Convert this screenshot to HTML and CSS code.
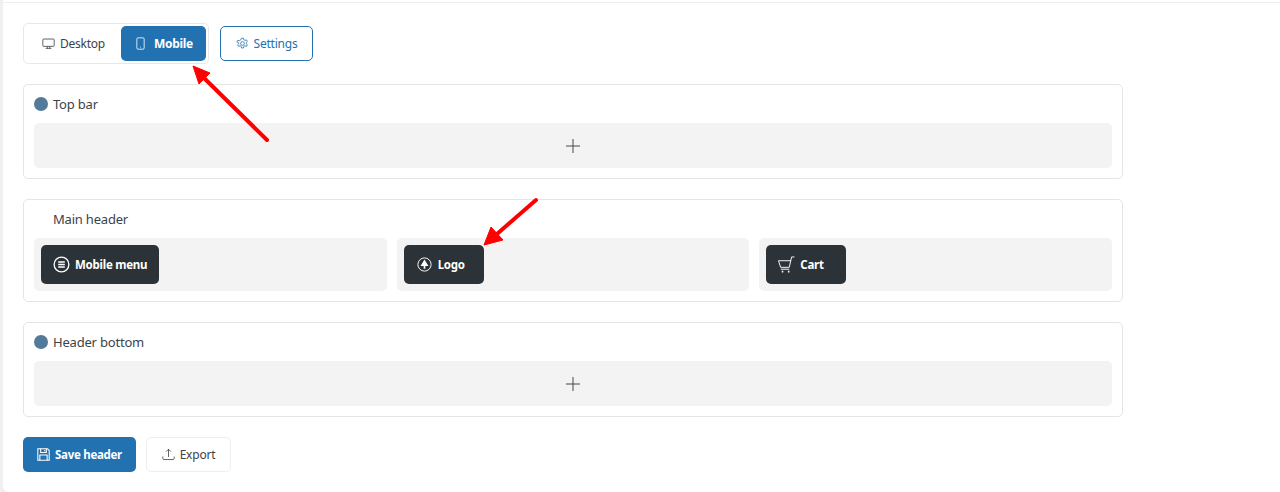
FILE: index.html
```html
<!DOCTYPE html>
<html lang="en">
  <head>
    <meta charset="UTF-8" />
    <title>Header builder</title>
    <link rel="stylesheet" href="styles.css">
  </head>
  <body>
    <div class="page">
      <div class="toolbar">
        <div class="device-tabs">
          <button class="btn tab">
            <svg class="icon" viewBox="0 0 16 16" fill="none" stroke="currentColor"><rect x="1" y="2.5" width="14" height="9" rx="1"/><path d="M6.5 11.5v2.5M9.5 11.5v2.5M4.5 14h7"/></svg>
            Desktop
          </button>
          <button class="btn tab tab-active">
            <svg class="icon" viewBox="0 0 16 16" fill="none" stroke="currentColor"><rect x="3.5" y="1" width="9" height="14" rx="1.5"/><path d="M7.5 12.5h1"/></svg>
            Mobile
          </button>
        </div>
        <button class="btn btn-outline">
          <svg class="icon" viewBox="0 0 16 16" fill="none" stroke="currentColor"><circle cx="8" cy="8" r="2.3"/><path d="M6.8 1.5h2.4l.4 2 1.3.7 1.9-.7 1.2 2-1.5 1.4v1.2l1.5 1.4-1.2 2-1.9-.7-1.3.7-.4 2H6.8l-.4-2-1.3-.7-1.9.7-1.2-2 1.5-1.4V7.4L1 6l1.2-2 1.9.7 1.3-.7z"/></svg>
          Settings
        </button>
      </div>

      <section class="card">
        <div class="card-title"><span class="dot"></span>Top bar</div>
        <div class="drop drop-empty">
          <svg class="plus" viewBox="0 0 14 14"><path d="M7 0v14M0 7h14" stroke="#4d4640" fill="none"/></svg>
        </div>
      </section>

      <section class="card">
        <div class="card-title card-title-nodot">Main header</div>
        <div class="columns">
          <div class="drop">
            <div class="chip">
              <svg class="chip-icon" viewBox="0 0 18 18" fill="none" stroke="currentColor"><circle cx="9" cy="9" r="7.8" stroke-width="1.4"/><path d="M5.5 6.3h7M5.5 9h7M5.5 11.7h7" stroke-width="1.5"/></svg>
              Mobile menu
            </div>
          </div>
          <div class="drop">
            <div class="chip chip-wide">
              <svg class="chip-icon" viewBox="0 0 18 18" fill="none" stroke="currentColor"><circle cx="9" cy="9" r="7"/><path d="M9 3.8l4.2 6.7h-3.3v3H8.1v-3H4.8z" fill="currentColor" stroke="none"/></svg>
              Logo
            </div>
          </div>
          <div class="drop">
            <div class="chip chip-wide">
              <svg class="chip-icon" viewBox="0 0 18 18" fill="none" stroke="currentColor"><path d="M.5 5h13l-1.6 7H2.8zM13.4 5.5l1-4.5h3M3 14h9"/><path d="M4 16.5h1.6M10.5 16.5h1.6" stroke-width="1.8"/></svg>
              Cart
            </div>
          </div>
        </div>
      </section>

      <section class="card">
        <div class="card-title"><span class="dot"></span>Header bottom</div>
        <div class="drop drop-empty">
          <svg class="plus" viewBox="0 0 14 14"><path d="M7 0v14M0 7h14" stroke="#4d4640" fill="none"/></svg>
        </div>
      </section>

      <div class="actions">
        <button class="btn btn-primary">
          <svg class="icon" viewBox="0 0 16 16" fill="none" stroke="currentColor" stroke-width="1.3"><path d="M1 1h12l2 2v12H1z"/><path d="M4.5 1v4.5h7V1M3.5 15V8.5h9V15M9.5 2.5v1.5"/></svg>
          Save header
        </button>
        <button class="btn btn-light">
          <svg class="icon" viewBox="0 0 16 16" fill="none" stroke="currentColor"><path d="M8 11V1.5M5 4.5l3-3 3 3M1 10.5v2.5c0 .7.6 1.2 1.5 1.2h11c.9 0 1.5-.5 1.5-1.2v-2.5"/></svg>
          Export
        </button>
      </div>

      <svg class="arrows" viewBox="0 0 1280 492">
        <g fill="#ff0000" stroke="#ff0000">
          <path d="M267 140L204 78" stroke-width="4" stroke-linecap="round"/>
          <path d="M193 66L210 73L199 84z"/>
          <path d="M536 200L497 234" stroke-width="4" stroke-linecap="round"/>
          <path d="M484 245L491 227L503 240z"/>
        </g>
      </svg>
    </div>
  </body>
</html>
```

FILE: styles.css
```css
* {
  box-sizing: border-box;
}
body {
  margin: 0;
  height: 492px;
  overflow: hidden;
  background-color: #f0f0f1;
  font-family: "Noto Sans", sans-serif;
  font-size: 13px;
  color: #3c434a;
}
.page {
  position: relative;
  margin-left: 3px;
  height: 492px;
  padding: 23px 20px 20px;
  background-color: #fff;
  border-bottom-left-radius: 6px;
}
.page::before {
  content: "";
  position: absolute;
  top: 2px;
  left: 0;
  right: 0;
  height: 1px;
  background-color: #eeeeee;
}
.toolbar {
  display: flex;
  align-items: center;
  gap: 11px;
  margin-bottom: 20px;
}
.device-tabs {
  display: flex;
  width: 186px;
  height: 41px;
  padding: 2px;
  border: 1px solid #e8e8e8;
  border-radius: 5px;
}
.btn {
  display: inline-flex;
  align-items: center;
  justify-content: center;
  gap: 5px;
  height: 35px;
  border: 1px solid transparent;
  border-radius: 5px;
  background: #fff;
  font-family: inherit;
  font-size: 12px;
  letter-spacing: -0.22px;
  color: #3c434a;
}
.tab {
  width: 96px;
}
.tab-active {
  width: 86px;
  gap: 7px;
  background-color: #2271b1;
  color: #fff;
  font-weight: 700;
  letter-spacing: -0.3px;
}
.btn-outline {
  width: 93px;
  border-color: #2271b1;
  color: #2271b1;
}
.btn-primary {
  width: 113px;
  background-color: #2271b1;
  color: #fff;
  font-size: 11.5px;
  font-weight: 700;
  letter-spacing: -0.3px;
}
.btn-light {
  width: 85px;
  border-color: #eeeeee;
}
.icon {
  width: 13px;
  height: 13px;
}
.card {
  width: 1100px;
  margin-bottom: 20px;
  padding: 10px;
  border: 1px solid #e5e5e5;
  border-radius: 5px;
}
.card-title {
  display: flex;
  align-items: center;
  gap: 5px;
  height: 18px;
  margin-bottom: 10px;
  font-size: 13px;
  letter-spacing: -0.2px;
}
.card-title-nodot {
  padding-left: 19px;
}
.dot {
  width: 14px;
  height: 14px;
  border-radius: 50%;
  background-color: #537a99;
}
.drop {
  padding: 7px;
  border-radius: 5px;
  background-color: #f3f3f3;
}
.drop-empty {
  display: flex;
  align-items: center;
  justify-content: center;
  height: 45px;
}
.plus {
  width: 14px;
  height: 14px;
}
.columns {
  display: grid;
  grid-template-columns: repeat(3, 1fr);
  gap: 10px;
}
.chip {
  display: inline-flex;
  align-items: center;
  gap: 5px;
  height: 39px;
  padding: 0 12px;
  border-radius: 5px;
  background-color: #2c3338;
  color: #fff;
  font-size: 11.5px;
  font-weight: 700;
  letter-spacing: -0.25px;
}
.chip-wide {
  width: 80px;
}
.chip-icon {
  width: 17px;
  height: 17px;
}
.actions {
  display: flex;
  gap: 10px;
}
.arrows {
  position: absolute;
  top: 0;
  left: -3px;
  width: 1280px;
  height: 492px;
  pointer-events: none;
}
```
